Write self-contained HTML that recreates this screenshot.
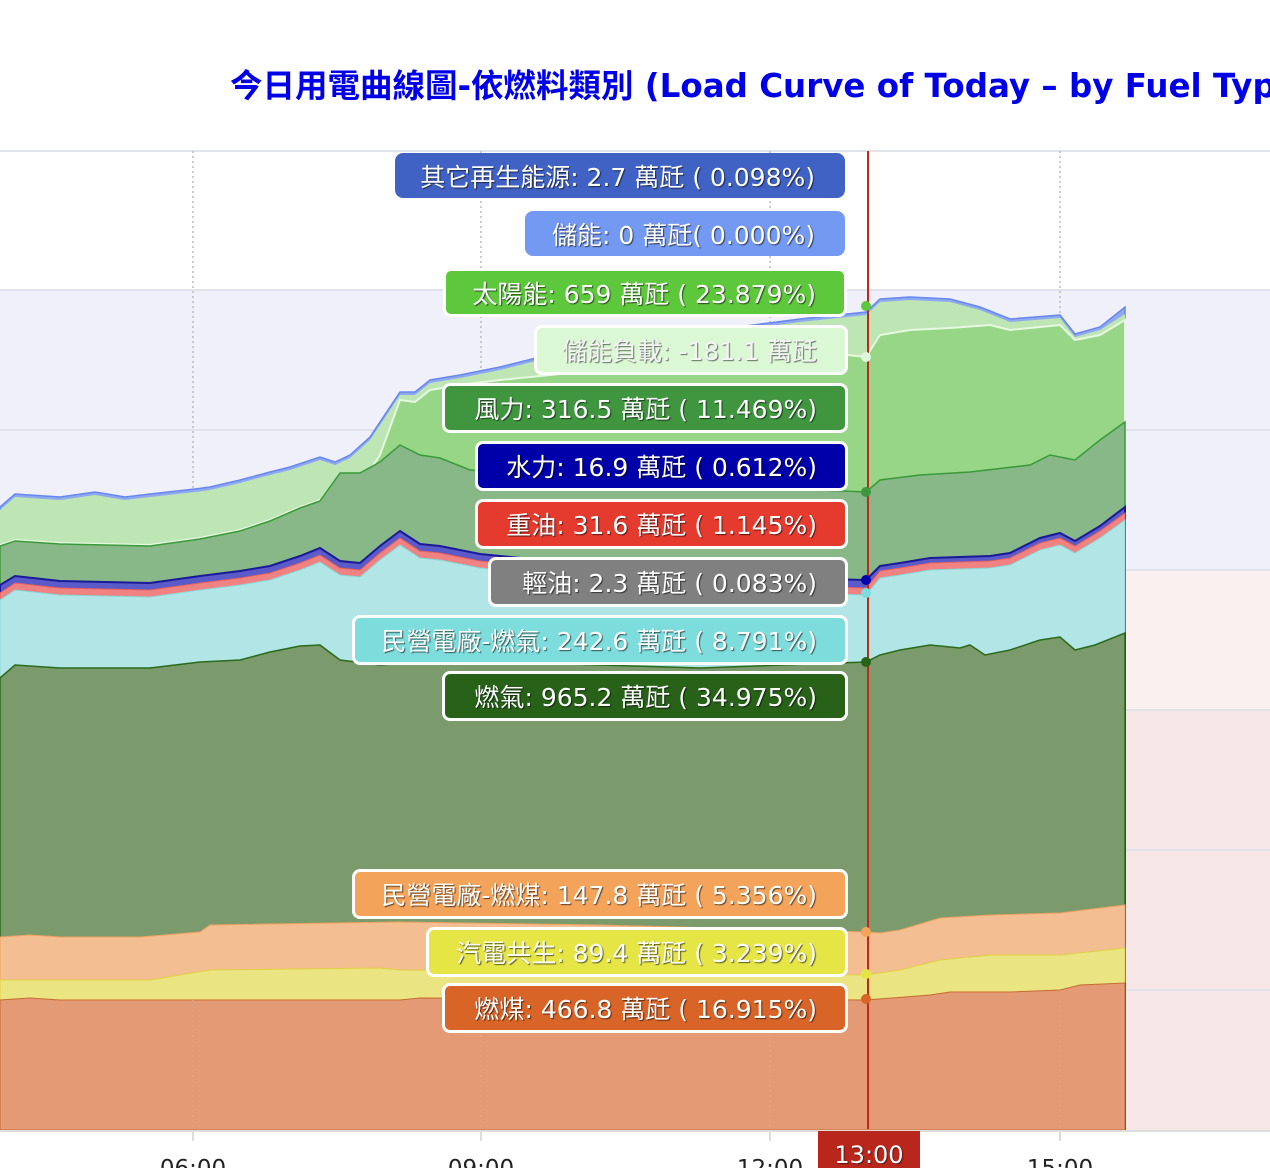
<!DOCTYPE html>
<html><head><meta charset="utf-8"><style>
html,body{margin:0;width:1270px;height:1168px;overflow:hidden}
body{background:#fff;position:relative;font-family:"DejaVu Sans","Noto Sans CJK TC",sans-serif}
.t{position:absolute;left:230px;top:60px;font-size:32.5px;font-weight:bold;color:#0000e6;white-space:nowrap}
.l{position:absolute;box-sizing:border-box;border-radius:8px;border:3px solid #fff;color:#fff;font-size:25px;text-align:right;padding-right:28px;white-space:nowrap;text-shadow:1px 1px 1px rgba(0,0,0,.6);display:flex;align-items:center;justify-content:flex-end}
.ax{position:absolute;top:1156px;font-size:23px;color:#222;width:100px;text-align:center;line-height:26px}
</style></head><body>
<svg width="1270" height="1168" style="position:absolute;left:0;top:0">
<rect x="0" y="290" width="1270" height="280" fill="#f0f0fa"/>
<rect x="0" y="570" width="1270" height="140" fill="#faf0f0"/>
<rect x="0" y="710" width="1270" height="420" fill="#f6e6e6"/>
<g stroke="#e2e2ea" stroke-width="2">
<line x1="0" y1="151" x2="1270" y2="151"/><line x1="0" y1="290" x2="1270" y2="290"/><line x1="0" y1="430" x2="1270" y2="430"/><line x1="0" y1="570" x2="1270" y2="570"/><line x1="0" y1="710" x2="1270" y2="710"/><line x1="0" y1="850" x2="1270" y2="850"/><line x1="0" y1="990" x2="1270" y2="990"/>
</g>
<g stroke="#bbb" stroke-width="1.5" stroke-dasharray="2,3">
<line x1="193" y1="151" x2="193" y2="1130"/><line x1="481" y1="151" x2="481" y2="1130"/><line x1="770" y1="151" x2="770" y2="1130"/><line x1="1060" y1="151" x2="1060" y2="1130"/>
</g>
<polygon fill="#8fa8f0" stroke="#6688ee" stroke-width="1.5" points="0,507 15,494 60,497 95,492 125,497 150,494 195,489 210,487 240,480 270,472 290,467 320,457 335,462 350,455 370,437 400,392 415,392 430,380 460,375 500,367 540,357 600,347 700,332 800,319 866,312 880,299 910,297 950,299 980,307 1010,319 1060,315 1075,334 1100,327 1125,307 1125,1130 0,1130"/>
<polygon fill="#bde6b4" points="0,510 15,497 60,500 95,495 125,500 150,497 195,492 210,490 240,483 270,475 290,470 320,460 335,465 350,458 370,440 400,395 415,395 430,383 460,378 500,370 540,360 600,350 700,335 800,322 866,315 880,302 910,300 950,302 980,310 1010,322 1060,318 1075,337 1100,330 1125,314 1125,1130 0,1130"/>
<polygon fill="#96d686" stroke="#e6f8e0" stroke-width="2" points="0,545 15,540 60,543 150,545 200,538 240,530 270,520 300,507 320,500 335,505 350,500 360,485 380,455 400,400 415,402 430,390 460,385 500,380 600,370 700,360 800,350 866,357 880,335 910,330 950,328 990,325 1010,330 1060,325 1075,340 1100,335 1125,320 1125,1130 0,1130"/>
<polygon fill="#88b888" stroke="#3a9a3a" stroke-width="1.5" points="0,546 15,541 60,544 150,546 200,539 240,531 270,521 300,508 320,501 340,473 360,473 380,462 400,445 420,455 440,458 470,470 600,478 700,485 866,492 880,480 920,475 970,472 1030,465 1050,455 1075,460 1100,440 1125,422 1125,1130 0,1130"/>
<polygon fill="#5a5ac8" stroke="#1a1a99" stroke-width="2" points="0,585 15,576 60,581 150,583 200,576 240,571 270,566 300,556 320,548 340,561 360,563 380,546 400,531 420,544 440,546 480,554 600,566 700,576 866,580 880,566 900,563 930,558 990,556 1010,553 1040,538 1060,533 1075,541 1100,526 1125,507 1125,1130 0,1130"/>
<polygon fill="#f08282" stroke="#e06060" stroke-width="1" points="0,593 15,583 60,588 150,590 200,583 240,578 270,573 300,563 320,555 340,568 360,570 380,553 400,538 420,551 440,553 480,561 600,573 700,583 866,588 880,571 900,568 930,563 990,561 1010,558 1040,543 1060,538 1075,546 1100,531 1125,513 1125,1130 0,1130"/>
<polygon fill="#b2e6e6" stroke="#88d6d6" stroke-width="1" points="0,600 15,590 60,595 150,597 200,590 240,585 270,580 300,570 320,562 340,575 360,577 380,560 400,545 420,558 440,560 480,568 600,580 700,590 866,595 880,578 900,575 930,570 990,568 1010,565 1040,550 1060,545 1075,553 1100,538 1125,520 1125,1130 0,1130"/>
<polygon fill="#7b9b6c" stroke="#2a6a1a" stroke-width="1.5" points="0,678 15,665 60,668 150,668 200,662 240,660 270,652 300,646 320,645 340,660 380,665 440,660 600,665 700,668 866,662 880,655 900,650 930,645 960,648 970,645 985,655 1010,650 1040,640 1060,637 1075,650 1095,645 1125,633 1125,1130 0,1130"/>
<polygon fill="#f3bf92" stroke="#f0a060" stroke-width="1" points="0,937 30,935 60,937 140,937 200,932 210,925 400,922 600,925 866,932 880,933 900,930 940,918 990,915 1060,913 1125,905 1125,1130 0,1130"/>
<polygon fill="#ebe482" stroke="#e0d040" stroke-width="1" points="0,980 150,980 210,970 380,968 400,970 600,972 866,975 900,970 940,960 990,955 1060,955 1125,948 1125,1130 0,1130"/>
<polygon fill="#e39a75" stroke="#c86a30" stroke-width="1" points="0,1000 30,998 60,1000 400,1000 420,998 866,1000 930,995 950,992 1010,992 1060,990 1080,985 1125,983 1125,1130 0,1130"/>
<g stroke="#e8a080" stroke-width="1.5" stroke-dasharray="2,3"><line x1="193" y1="1000" x2="193" y2="1130"/><line x1="481" y1="1000" x2="481" y2="1130"/><line x1="770" y1="1000" x2="770" y2="1130"/><line x1="1060" y1="1000" x2="1060" y2="1130"/></g>
<line x1="0" y1="1131" x2="1270" y2="1131" stroke="#ddd" stroke-width="2"/>
<g stroke="#ddd" stroke-width="2"><line x1="193" y1="1131" x2="193" y2="1141"/><line x1="481" y1="1131" x2="481" y2="1141"/><line x1="770" y1="1131" x2="770" y2="1141"/><line x1="1060" y1="1131" x2="1060" y2="1141"/></g>
<line x1="868" y1="151" x2="868" y2="1129" stroke="#c0281c" stroke-width="2"/>
<circle cx="866" cy="306" r="5" fill="#5ec83c"/><circle cx="866" cy="357" r="5" fill="#e0f6dc"/><circle cx="866" cy="492" r="5" fill="#3f963f"/><circle cx="866" cy="580" r="5" fill="#0000aa"/><circle cx="866" cy="593" r="5" fill="#7ddcdc"/><circle cx="866" cy="662" r="5" fill="#276218"/><circle cx="866" cy="932" r="5" fill="#f3a35a"/><circle cx="866" cy="974" r="5" fill="#e5e546"/><circle cx="866" cy="999" r="5" fill="#d86428"/>
</svg>
<div class="t">今日用電曲線圖-依燃料類別 (Load Curve of Today – by Fuel Type)</div>
<div class="l" style="left:395px;top:153px;width:450px;height:45px;background:#4062c4;border:none;padding-right:30px">其它再生能源: 2.7 萬瓩 ( 0.098%)</div>
<div class="l" style="left:525px;top:211px;width:320px;height:45px;background:#7499f2;border:none;padding-right:30px">儲能: 0 萬瓩( 0.000%)</div>
<div class="l" style="left:443px;top:268px;width:404px;height:49px;background:#5ec83c">太陽能: 659 萬瓩 ( 23.879%)</div>
<div class="l" style="left:534px;top:325px;width:314px;height:50px;background:#dbf8d4;color:#f4f4f4;text-shadow:1px 1px 1px rgba(0,0,0,.55)">儲能負載: -181.1 萬瓩</div>
<div class="l" style="left:442px;top:383px;width:406px;height:50px;background:#3f963f">風力: 316.5 萬瓩 ( 11.469%)</div>
<div class="l" style="left:475px;top:441px;width:373px;height:50px;background:#0000aa">水力: 16.9 萬瓩 ( 0.612%)</div>
<div class="l" style="left:475px;top:499px;width:373px;height:50px;background:#e53a2e">重油: 31.6 萬瓩 ( 1.145%)</div>
<div class="l" style="left:488px;top:557px;width:360px;height:50px;background:#808080">輕油: 2.3 萬瓩 ( 0.083%)</div>
<div class="l" style="left:352px;top:615px;width:496px;height:50px;background:#7ddcdc">民營電廠-燃氣: 242.6 萬瓩 ( 8.791%)</div>
<div class="l" style="left:442px;top:671px;width:406px;height:50px;background:#276218">燃氣: 965.2 萬瓩 ( 34.975%)</div>
<div class="l" style="left:352px;top:869px;width:496px;height:50px;background:#f3a35a">民營電廠-燃煤: 147.8 萬瓩 ( 5.356%)</div>
<div class="l" style="left:426px;top:927px;width:422px;height:50px;background:#e5e546">汽電共生: 89.4 萬瓩 ( 3.239%)</div>
<div class="l" style="left:442px;top:983px;width:406px;height:50px;background:#d86428">燃煤: 466.8 萬瓩 ( 16.915%)</div>
<div class="ax" style="left:143px">06:00</div>
<div class="ax" style="left:431px">09:00</div>
<div class="ax" style="left:720px">12:00</div>
<div class="ax" style="left:1010px">15:00</div>
<div style="position:absolute;left:818px;top:1131px;width:102px;height:40px;background:#b8261c;color:#fff;font-size:24px;text-align:center;line-height:48px;text-shadow:1px 1px 1px rgba(0,0,0,.5)">13:00</div>
</body></html>
